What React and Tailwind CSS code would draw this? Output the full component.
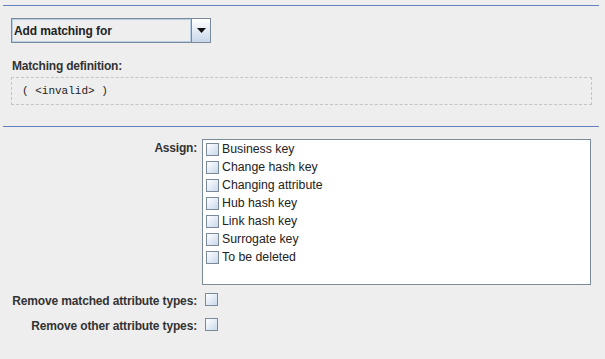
import React from "react";

const font = { fontFamily: '"Liberation Sans", Arial, sans-serif' };

function Check() {
  return (
    <span className="inline-block w-[13px] h-[13px] border border-[#7a8a99] bg-gradient-to-br from-[#ffffff] to-[#c9d9ec] shrink-0" />
  );
}

const items = [
  "Business key",
  "Change hash key",
  "Changing attribute",
  "Hub hash key",
  "Link hash key",
  "Surrogate key",
  "To be deleted",
];

export default function App() {
  return (
    <div
      className="w-[605px] h-[359px] bg-[#eeeeee] text-[#333333] flex flex-col overflow-hidden"
      style={font}
    >
      <div className="mt-[5px] mx-[3px] w-[596px] h-px bg-[#6382bf]" />
      <div className="mt-[12px] ml-[11px] w-[200px] h-[25px] flex border border-[#7a8a99]">
        <div className="flex-1 border border-[#b8cfe5] bg-[#eeeeee] flex items-center pl-[1px] text-[12px] font-bold text-[#222] tracking-[-0.1px]">
          Add matching for
        </div>
        <div className="w-[19px] border-l border-[#7a8a99] bg-gradient-to-b from-[#ffffff] to-[#c8d8ea] flex items-center justify-center">
          <svg width="9" height="5" viewBox="0 0 9 5">
            <path d="M0 0H9L4.5 5Z" fill="#111" />
          </svg>
        </div>
      </div>
      <div className="mt-[16px] ml-[12px] text-[12px] font-bold leading-[14px] tracking-[-0.2px]">
        Matching definition:
      </div>
      <div className="mt-[4px] ml-[11px] w-[581px] h-[28px] border border-dashed border-[#c4c4c4] flex items-center pl-[10px] text-[11px] text-[#222]" style={{ fontFamily: '"Liberation Mono", "Courier New", monospace' }}>
        ( &lt;invalid&gt; )
      </div>
      <div className="mt-[21px] mx-[3px] w-[596px] h-px bg-[#6382bf]" />
      <div className="mt-[12px] flex">
        <div className="w-[198px] text-right pr-[1px] text-[12px] font-bold pt-[2px] leading-[14px] tracking-[-0.2px]">
          Assign:
        </div>
        <div className="ml-[4px] w-[389px] h-[146px] border border-[#7a8a99] bg-white pl-[3px] flex flex-col">
          {items.map((t) => (
            <div key={t} className="h-[18px] flex items-center gap-[3px] text-[12.3px] text-[#222]">
              <Check />
              <span>{t}</span>
            </div>
          ))}
        </div>
      </div>
      <div className="mt-[9px] flex items-center h-[14px]">
        <div className="w-[198px] text-right pr-[1px] text-[12px] font-bold tracking-[-0.15px]">
          Remove matched attribute types:
        </div>
        <div className="ml-[7px]"><Check /></div>
      </div>
      <div className="mt-[11px] flex items-center h-[14px]">
        <div className="w-[198px] text-right pr-[1px] text-[12px] font-bold tracking-[-0.15px]">
          Remove other attribute types:
        </div>
        <div className="ml-[7px]"><Check /></div>
      </div>
    </div>
  );
}
